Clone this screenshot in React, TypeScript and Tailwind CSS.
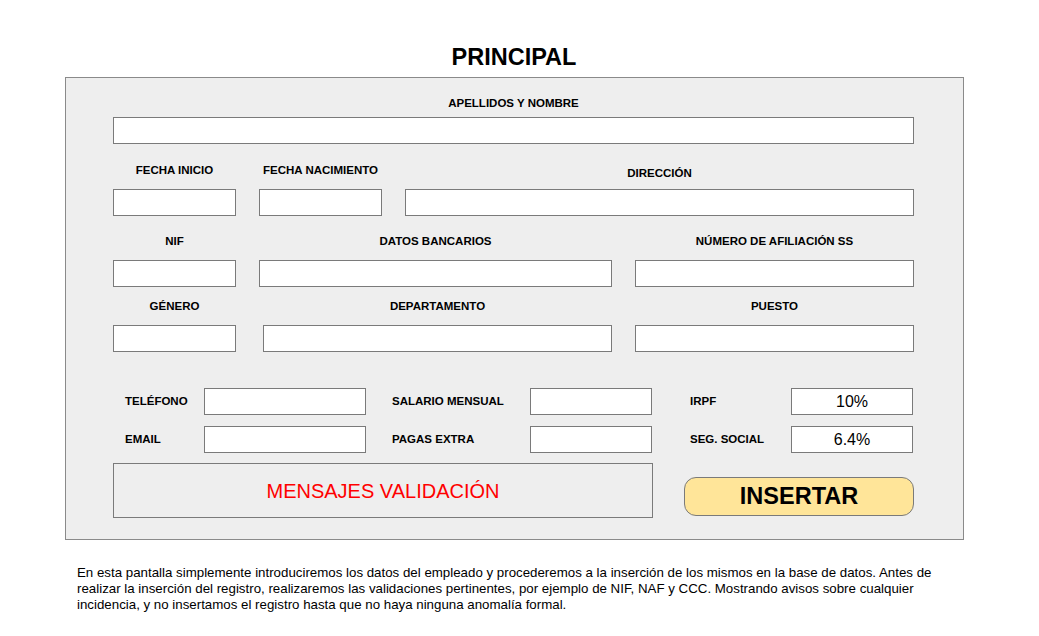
const font = { fontFamily: '"Liberation Sans", Arial, sans-serif' }

function Box({ className = '', children }: { className?: string; children?: React.ReactNode }) {
  return (
    <div className={`h-[27px] border border-[#7a7a7a] bg-white ${className}`}>{children}</div>
  )
}

function Field({ label, width, labelClass = '' }: { label: string; width: string; labelClass?: string }) {
  return (
    <div className={`flex flex-col ${width}`}>
      <div className={`h-[12px] text-center text-[11.5px] font-bold leading-[12px] text-black ${labelClass}`}>
        {label}
      </div>
      <Box className="mt-[13px]" />
    </div>
  )
}

function InlineField({
  label,
  labelWidth,
  inputWidth,
  value,
}: {
  label: string
  labelWidth: string
  inputWidth: string
  value?: string
}) {
  return (
    <div className="flex items-center">
      <div className={`${labelWidth} text-[11.5px] font-bold text-black`}>{label}</div>
      <Box className={`${inputWidth} flex items-center justify-center text-[16px] text-black`}>
        {value}
      </Box>
    </div>
  )
}

export default function App() {
  return (
    <div className="min-h-screen w-[1039px] bg-white" style={font}>
      <div className="pt-[43px] pl-[65px] w-[963px]">
        <h1 className="text-center text-[23.5px] font-bold leading-[29px] text-black">PRINCIPAL</h1>

        <div className="mt-[5px] h-[463px] w-[899px] border border-[#8a8a8a] bg-[#eeeeee] pl-[47px] pt-[19px]">
          {/* row 1 */}
          <div className="flex flex-col w-[801px]">
            <div className="h-[12px] text-center text-[11.5px] font-bold leading-[12px]">APELLIDOS Y NOMBRE</div>
            <Box className="mt-[8px]" />
          </div>

          {/* row 2 */}
          <div className="mt-[20px] flex">
            <Field label="FECHA INICIO" width="w-[123px]" />
            <Field label="FECHA NACIMIENTO" width="ml-[23px] w-[123px]" />
            <div className="ml-[23px] flex w-[509px] flex-col">
              <div className="h-[12px] pt-[3px] text-center text-[11.5px] font-bold leading-[12px]">DIRECCIÓN</div>
              <Box className="mt-[13px]" />
            </div>
          </div>

          {/* row 3 */}
          <div className="mt-[19px] flex">
            <Field label="NIF" width="w-[123px]" />
            <Field label="DATOS BANCARIOS" width="ml-[23px] w-[353px]" />
            <Field label="NÚMERO DE AFILIACIÓN SS" width="ml-[23px] w-[279px]" />
          </div>

          {/* row 4 */}
          <div className="mt-[13px] flex">
            <Field label="GÉNERO" width="w-[123px]" />
            <Field label="DEPARTAMENTO" width="ml-[27px] w-[349px]" />
            <Field label="PUESTO" width="ml-[23px] w-[279px]" />
          </div>

          {/* rows 5-6 */}
          <div className="mt-[36px] flex flex-col gap-[11px]">
            <div className="flex">
              <InlineField label="TELÉFONO" labelWidth="w-[91px] pl-3" inputWidth="w-[162px]" />
              <div className="w-[26px]" />
              <InlineField label="SALARIO MENSUAL" labelWidth="w-[138px]" inputWidth="w-[122px]" />
              <div className="w-[38px]" />
              <InlineField label="IRPF" labelWidth="w-[101px]" inputWidth="w-[122px]" value="10%" />
            </div>
            <div className="flex">
              <InlineField label="EMAIL" labelWidth="w-[91px] pl-3" inputWidth="w-[162px]" />
              <div className="w-[26px]" />
              <InlineField label="PAGAS EXTRA" labelWidth="w-[138px]" inputWidth="w-[122px]" />
              <div className="w-[38px]" />
              <InlineField label="SEG. SOCIAL" labelWidth="w-[101px]" inputWidth="w-[122px]" value="6.4%" />
            </div>
          </div>

          {/* messages + button */}
          <div className="mt-[10px] flex items-start">
            <div className="flex h-[55px] w-[540px] items-center justify-center border border-[#7a7a7a] text-[20px] text-[#ff0000]">
              MENSAJES VALIDACIÓN
            </div>
            <button className="ml-[31px] mt-[14px] flex h-[39px] w-[230px] items-center justify-center rounded-[12px] border border-[#7a7a7a] bg-[#ffe599] text-[23.5px] font-bold text-black">
              INSERTAR
            </button>
          </div>
        </div>
      </div>

      <p className="ml-[77px] mt-[25px] w-[880px] text-[13.3px] leading-[16px] text-black">
        En esta pantalla simplemente introduciremos los datos del empleado y procederemos a la inserción de los mismos en la base de datos. Antes de realizar la inserción del registro, realizaremos las validaciones pertinentes, por ejemplo de NIF, NAF y CCC. Mostrando avisos sobre cualquier incidencia, y no insertamos el registro hasta que no haya ninguna anomalía formal.
      </p>
    </div>
  )
}
